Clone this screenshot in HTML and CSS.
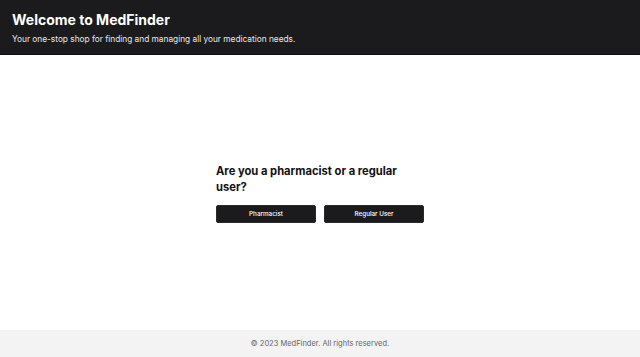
FILE: index.html
```html
<!DOCTYPE html>
<html lang="en">
<head>
<meta charset="utf-8">
<title>MedFinder</title>
<link rel="stylesheet" href="styles.css">
</head>
<body>
<div class="page">
  <header class="header">
    <h1 class="title">Welcome to MedFinder</h1>
    <p class="subtitle">Your one-stop shop for finding and managing all your medication needs.</p>
  </header>
  <main class="main">
    <div class="chooser">
      <h2 class="question">Are you a pharmacist or a regular user?</h2>
      <div class="buttons">
        <button class="btn">Pharmacist</button>
        <button class="btn">Regular User</button>
      </div>
    </div>
  </main>
  <footer class="footer">© 2023 MedFinder. All rights reserved.</footer>
</div>
</body>
</html>
```
FILE: styles.css
```css
* { box-sizing: border-box; }
html, body { margin: 0; padding: 0; height: 100%; }
body {
  font-family: Inter, "Noto Sans", sans-serif;
  background: #ffffff;
  color: #111;
}
.page {
  display: flex;
  flex-direction: column;
  height: 357px;
}
.header {
  background: #1b1b1d;
  color: #fff;
  padding: 11px 12px 0 12px;
  height: 55px;
  border-bottom: 1px solid #111;
}
.title {
  margin: 0;
  font-size: 14px;
  font-weight: 700;
  line-height: 18px;
}
.subtitle {
  margin: 5px 0 0 0;
  font-size: 8.3px;
  line-height: 11px;
  color: #e8e8e8;
}
.main {
  flex: 1;
  display: flex;
  align-items: center;
  justify-content: center;
}
.chooser {
  width: 208px;
}
.question {
  margin: 0 0 10px 0;
  font-size: 11.2px;
  font-weight: 700;
  line-height: 16px;
  color: #111;
}
.buttons {
  display: flex;
  gap: 8px;
}
.btn {
  flex: 1;
  height: 18px;
  background: #1b1b1d;
  color: #fff;
  border: 1px solid #2a2a2c;
  border-radius: 2px;
  font-family: Inter, "Noto Sans", sans-serif;
  font-size: 6.3px;
  font-weight: 500;
  padding: 0;
}
.footer {
  height: 27px;
  background: #f3f3f3;
  color: #666;
  font-size: 7.5px;
  display: flex;
  align-items: center;
  justify-content: center;
}
```
